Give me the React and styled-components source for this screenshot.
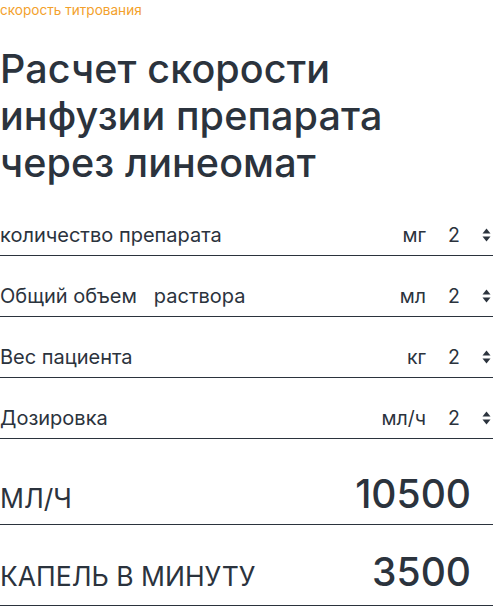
import React, { useState } from 'react'
import styled, { createGlobalStyle } from 'styled-components';

const GlobalStyle = createGlobalStyle`
  html, body {
    margin: 0;
    padding: 0;
    background: #ffffff;
  }
  body {
    font-family: 'Inter', 'Noto Sans', sans-serif;
    color: #2b333d;
  }
`;

const fields = [
  { key: 'amount', label: 'количество препарата', unit: 'мг' },
  { key: 'volume', label: 'Общий объем\u00a0\u00a0 раствора', unit: 'мл' },
  { key: 'weight', label: 'Вес пациента', unit: 'кг' },
  { key: 'dose', label: 'Дозировка', unit: 'мл/ч' },
];

const Arrows = () => (
  <svg width="9" height="14" viewBox="0 0 9 14">
    <path d="M4.5 0.5 L8.5 5.5 L0.5 5.5 Z" fill="#2b333d" />
    <path d="M4.5 13.5 L8.5 8.5 L0.5 8.5 Z" fill="#2b333d" />
  </svg>
);

const App = () => {
  const [data, setData] = useState({ amount: 2, volume: 2, weight: 2, dose: 2 });

  const step = (name, d) => () => {
    setData(prev => ({ ...prev, [name]: prev[name] + d }));
  };

  return (
    <>
      <GlobalStyle />
      <Page>
        <Subtitle>скорость титрования</Subtitle>
        <Title>Расчет скорости инфузии препарата через линеомат</Title>
        <Form>
          {fields.map(f => (
            <Row key={f.key}>
              <Label>{f.label}</Label>
              <Unit>{f.unit}</Unit>
              <Value>{data[f.key]}</Value>
              <Spin onClick={step(f.key, 1)}>
                <Arrows />
              </Spin>
            </Row>
          ))}
        </Form>
        <Results>
          <ResultRow $gap={8}>
            <ResultLabel>МЛ/Ч</ResultLabel>
            <ResultValue>10500</ResultValue>
          </ResultRow>
          <ResultRow $gap={11}>
            <ResultLabel>КАПЕЛЬ В МИНУТУ</ResultLabel>
            <ResultValue>3500</ResultValue>
          </ResultRow>
        </Results>
      </Page>
    </>
  )
}

export default App;

  const Page = styled.div`
    width: 493px;
    display: flex;
    flex-direction: column;
  `;

  const Subtitle = styled.div`
    font-size: 13.6px;
    line-height: 20px;
    color: #f3a12c;
    margin-top: 0px;
  `;

  const Title = styled.h1`
    margin: 26px 0 0 0;
    font-size: 39.5px;
    font-weight: 500;
    line-height: 47px;
    letter-spacing: 0.1px;
    max-width: 420px;
    color: #2b333d;
  `;

  const Form = styled.div`
    margin-top: 8px;
    display: flex;
    flex-direction: column;
  `;

  const Row = styled.div`
    display: flex;
    align-items: flex-end;
    height: 61px;
    padding-bottom: 8px;
    box-sizing: border-box;
    border-bottom: 1px solid #2b333d;
    font-size: 20px;
    line-height: 24px;
  `;

  const Label = styled.div`
    flex: 1;
    white-space: pre;
  `;

  const Unit = styled.div`
    font-size: 19.5px;
  `;

  const Value = styled.div`
    width: 34px;
    text-align: right;
    font-size: 19.5px;
    margin-right: 22px;
  `;

  const Spin = styled.div`
    width: 10px;
    height: 24px;
    display: flex;
    align-items: center;
    margin-right: 1px;
    cursor: pointer;
  `;

  const Results = styled.div`
    display: flex;
    flex-direction: column;
  `;

  const ResultRow = styled.div`
    display: flex;
    align-items: baseline;
    justify-content: space-between;
    height: 86px;
    padding: 0 22px ${p => p.$gap}px 0;
    box-sizing: border-box;
    border-bottom: 1px solid #2b333d;
    align-content: flex-end;
    flex-wrap: wrap;
    &:last-child {
      height: 81px;
    }
  `;

  const ResultLabel = styled.div`
    font-size: 26.5px;
    line-height: 30px;
  `;

  const ResultValue = styled.div`
    font-size: 39px;
    font-weight: 500;
    line-height: 44px;
  `;
